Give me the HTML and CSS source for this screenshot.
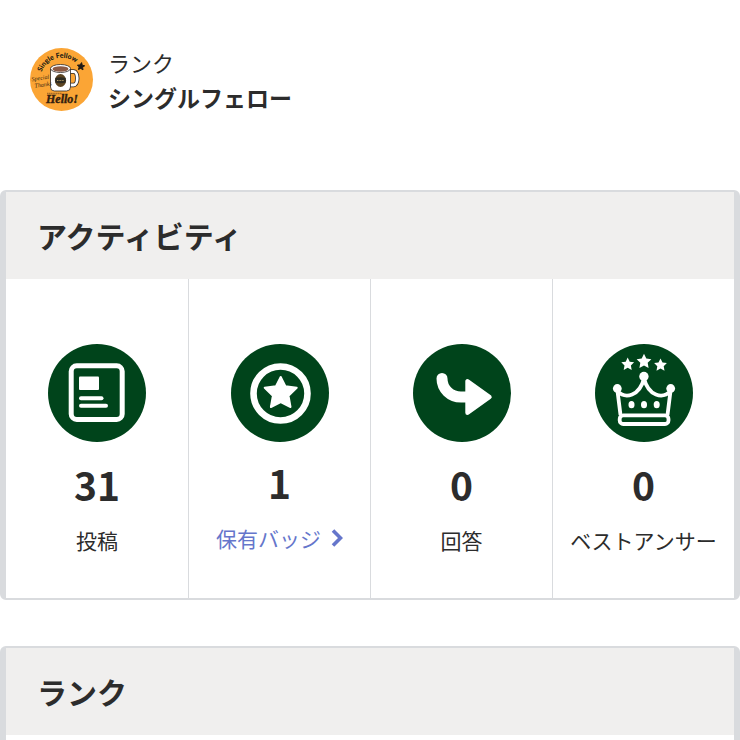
FILE: index.html
```html
<!DOCTYPE html>
<html lang="ja">
<head>
    <meta charset="UTF-8">
    <meta name="viewport" content="width=device-width, initial-scale=1.0">
    <title>マイページ</title>
    <link rel="stylesheet" href="styles.css">
</head>
<body>
    <header class="profile">
        <svg class="profile-badge" viewBox="0 0 64 64" role="img" aria-label="Single Fellow">
            <defs>
                <path id="badge-arc" d="M11.5 24A21.5 21.5 0 0 1 52 24"/>
            </defs>
            <circle cx="31.5" cy="31.5" r="31.5" fill="#fba535"/>
            <text class="badge-name"><textPath href="#badge-arc">Single Fellow</textPath></text>
            <path d="M51.6 14.6l.6 2.6 2.5.6-2.1 1.5.4 2.6-2.2-1.5-2.4 1.1.8-2.5-1.8-1.9 2.6-.1z" fill="#211a14" stroke="#211a14"/>
            <path d="M40 23.5h3.5c5 0 5 13.5 0 13.5H40" fill="none" stroke="#2c2622" stroke-width="4.4"/>
            <path d="M40 23.5h3.5c5 0 5 13.5 0 13.5H40" fill="none" stroke="#fff" stroke-width="2.8"/>
            <path d="M20.5 21v18q0 4 4 4h12q4 0 4-4V21z" fill="#fff" stroke="#2c2622" stroke-width=".8"/>
            <ellipse cx="30.5" cy="20.5" rx="10" ry="4" fill="#fff" stroke="#2c2622" stroke-width=".8"/>
            <ellipse cx="30.5" cy="21" rx="8" ry="2.7" fill="#8d5a43"/>
            <ellipse cx="30.5" cy="32.5" rx="5.6" ry="6.5" fill="#5c4522"/>
            <path d="M25.3 30q5.2-1.5 10.4 0v4.5q-5.2 1.5-10.4 0z" fill="#2d2b22"/>
            <path d="M27 32.5h7" stroke="#b69c63" stroke-dasharray="1 .6"/>
            <g transform="rotate(-8 3 34)">
                <text class="badge-script" x="2" y="33">Special</text>
                <text class="badge-script" x="4" y="40">Thanks</text>
            </g>
            <path d="M17 45.5h15" stroke="#a56c2a" stroke-width="1.6" stroke-dasharray="1.4 .4"/>
            <text class="badge-hello" x="16" y="55">Hello!</text>
        </svg>
        <div class="profile-text">
            <p class="profile-label">ランク</p>
            <p class="profile-rank">シングルフェロー</p>
        </div>
    </header>

    <main class="content">
        <section class="card">
            <h2 class="card-title">アクティビティ</h2>
            <div class="stats">
                <div class="stat">
                    <svg class="stat-icon" viewBox="0 0 98 98" aria-hidden="true">
                        <circle cx="49" cy="49" r="49" fill="#00441b"/>
                        <rect x="23.2" y="21.8" width="51" height="53.6" rx="5.5" fill="none" stroke="#fff" stroke-width="5"/>
                        <rect x="31" y="32.6" width="20" height="13.5" rx="1" fill="#fff"/>
                        <rect x="31" y="52.2" width="24.5" height="4" rx="2" fill="#fff"/>
                        <rect x="31" y="59.7" width="29" height="4" rx="2" fill="#fff"/>
                    </svg>
                    <p class="stat-number">31</p>
                    <p class="stat-label">投稿</p>
                </div>
                <div class="stat stat-linked">
                    <svg class="stat-icon" viewBox="0 0 98 98" aria-hidden="true">
                        <circle cx="49" cy="49" r="49" fill="#00441b"/>
                        <circle cx="49.5" cy="49.5" r="27" fill="none" stroke="#fff" stroke-width="6.6"/>
                        <path d="M49.7 33l4.7 9.3 11.3 1.5-8.2 8 2 11.2-9.8-4.8-9.8 4.8 2-11.2-8.2-8 11.3-1.5z" fill="#fff" stroke="#fff" stroke-width="2" stroke-linejoin="round"/>
                    </svg>
                    <p class="stat-number">1</p>
                    <a class="stat-label stat-link" href="#badges">保有バッジ
                        <svg class="chevron" viewBox="0 0 12 20" aria-hidden="true">
                            <path d="M2 2.5l7.5 7.5L2 17.5" fill="none" stroke="currentColor" stroke-width="3.6"/>
                        </svg>
                    </a>
                </div>
                <div class="stat">
                    <svg class="stat-icon" viewBox="0 0 98 98" aria-hidden="true">
                        <circle cx="49" cy="49" r="49" fill="#00441b"/>
                        <path d="M29 34.5C29 45 37.5 53 48 53h8" fill="none" stroke="#fff" stroke-width="11" stroke-linecap="round"/>
                        <path d="M54.5 37.3v31.4L76.5 53z" fill="#fff" stroke="#fff" stroke-width="4.4" stroke-linejoin="round"/>
                    </svg>
                    <p class="stat-number">0</p>
                    <p class="stat-label">回答</p>
                </div>
                <div class="stat">
                    <svg class="stat-icon" viewBox="0 0 98 98" aria-hidden="true">
                        <defs>
                            <path id="star" d="M0-6.4l2 4.1 4.4.6-3.2 3.1.8 4.5L0 3.8l-4 2.1.8-4.5-3.2-3.1 4.4-.6z"/>
                        </defs>
                        <circle cx="49" cy="49" r="49" fill="#00441b"/>
                        <g fill="#fff">
                            <use href="#star" x="32.7" y="20"/>
                            <use href="#star" transform="translate(49 17.2) scale(1.15)"/>
                            <use href="#star" x="65.5" y="20.8"/>
                            <circle cx="22.3" cy="44.5" r="4.4"/>
                            <circle cx="48.9" cy="32.5" r="4.7"/>
                            <circle cx="75.7" cy="44.5" r="4.4"/>
                            <ellipse cx="36.5" cy="60.7" rx="3" ry="3.6"/>
                            <ellipse cx="49" cy="60.7" rx="3" ry="3.6"/>
                            <ellipse cx="61.7" cy="60.7" rx="3" ry="3.6"/>
                        </g>
                        <g fill="none" stroke="#fff" stroke-width="3.8" stroke-linejoin="round">
                            <path d="M25.5 71L22.5 47c8 8.5 22 5 26.500-12.500C53.500 52 67.500 55.500 75.500 47l-3 24"/>
                            <rect x="24.7" y="71.4" width="48.8" height="8.6" rx="3.5"/>
                        </g>
                    </svg>
                    <p class="stat-number">0</p>
                    <p class="stat-label">ベストアンサー</p>
                </div>
            </div>
        </section>

        <section class="card card-rank">
            <h2 class="card-title">ランク</h2>
        </section>
    </main>
</body>
</html>
```

FILE: styles.css
```css
/* --- Base --- */
* {
    box-sizing: border-box;
}

body {
    display: flex;
    flex-direction: column;
    min-height: 100vh;
    margin: 0;
    background-color: #ffffff;
    color: #2c2c2c;
    font-family: 'Noto Sans CJK JP', sans-serif;
}

p,
h2 {
    margin: 0;
}

/* --- Profile header --- */
.profile {
    display: flex;
    align-items: center;
    gap: 14px;
    padding: 45px 30px 75px;
}

.profile-badge {
    width: 64px;
    height: 64px;
}

.badge-name {
    font-family: Lato, sans-serif;
    font-size: 7px;
    font-weight: 900;
    fill: #211a14;
}

.badge-script {
    font-family: 'Liberation Serif', serif;
    font-size: 6px;
    font-style: italic;
    fill: #3d2a14;
}

.badge-hello {
    font-family: 'Liberation Serif', serif;
    font-size: 12px;
    font-style: italic;
    font-weight: 700;
    fill: #33200f;
    stroke: #33200f;
    stroke-width: 0.4px;
}

.profile-label {
    font-size: 22px;
    line-height: 35px;
}

.profile-rank {
    font-size: 23px;
    font-weight: 700;
    line-height: 35px;
}

/* --- Cards --- */
.content {
    display: flex;
    flex: 1;
    flex-direction: column;
    gap: 46px;
}

.card {
    border: 2px solid #d9dbde;
    border-width: 2px 6px;
    border-radius: 6px;
}

.card-title {
    padding: 22px 31px;
    background-color: #f0efee;
    font-size: 30px;
    font-weight: 700;
    line-height: 43px;
}

.card-rank {
    flex: 1;
    border-bottom: 0;
    border-radius: 6px 6px 0 0;
}

/* --- Activity stats --- */
.stats {
    display: grid;
    grid-template-columns: repeat(4, 1fr);
}

.stat {
    display: flex;
    flex-direction: column;
    align-items: center;
    padding: 65px 8px 44px;
    border-left: 1px solid #d9dbde;
}

.stat:first-child {
    border-left: 0;
}

.stat-icon {
    width: 98px;
    height: 98px;
}

.stat-number {
    margin: 20px 0;
    font-size: 39px;
    font-weight: 700;
    line-height: 44px;
}

.stat-label {
    font-size: 21px;
    line-height: 28px;
    white-space: nowrap;
}

.stat-linked .stat-number {
    margin-top: 18px;
}

.stat-link {
    display: flex;
    align-items: center;
    gap: 10px;
    color: #6576cb;
    text-decoration: none;
}

.chevron {
    width: 12px;
    height: 20px;
}
```
